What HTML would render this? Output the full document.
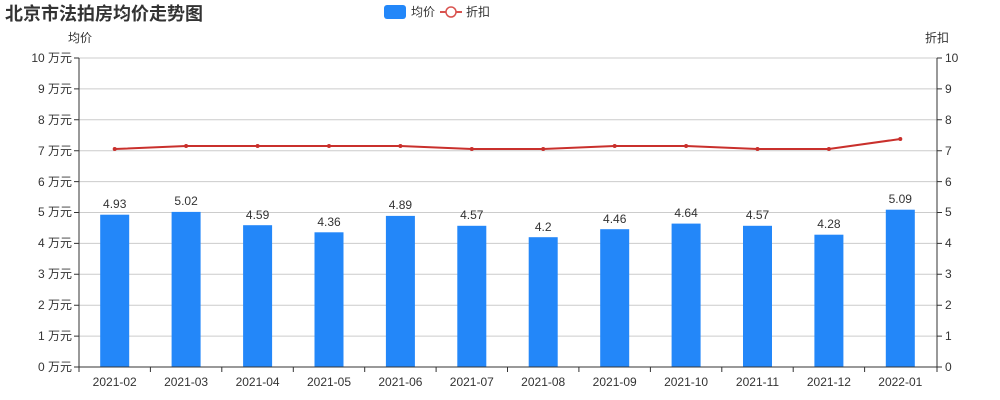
<!DOCTYPE html>
<html><head><meta charset="utf-8"><style>
html,body{margin:0;padding:0;background:#fff;}
svg{display:block;font-family:"Liberation Sans","Noto Sans CJK SC",sans-serif;}
</style></head><body>
<svg width="1000" height="400" viewBox="0 0 1000 400" xmlns="http://www.w3.org/2000/svg">
<text x="5" y="20" font-size="18" font-weight="bold" fill="#333">北京市法拍房均价走势图</text>
<rect x="384" y="5" width="22" height="14" rx="3" fill="#2387f9"/>
<text x="411" y="16" font-size="12" fill="#333">均价</text>
<line x1="440" y1="12" x2="462" y2="12" stroke="#d9534f" stroke-width="2"/>
<circle cx="451" cy="12" r="5" fill="#fff" stroke="#d9534f" stroke-width="1.5"/>
<text x="466" y="16" font-size="12" fill="#333">折扣</text>
<text x="80" y="42" font-size="12" fill="#333" text-anchor="middle">均价</text>
<text x="937" y="42" font-size="12" fill="#333" text-anchor="middle">折扣</text>
<g stroke="#ccc" stroke-width="1">
<line x1="79" y1="336.1" x2="937" y2="336.1"/><line x1="79" y1="305.2" x2="937" y2="305.2"/>
<line x1="79" y1="274.3" x2="937" y2="274.3"/><line x1="79" y1="243.4" x2="937" y2="243.4"/>
<line x1="79" y1="212.5" x2="937" y2="212.5"/><line x1="79" y1="181.6" x2="937" y2="181.6"/>
<line x1="79" y1="150.7" x2="937" y2="150.7"/><line x1="79" y1="119.8" x2="937" y2="119.8"/>
<line x1="79" y1="88.9" x2="937" y2="88.9"/><line x1="79" y1="58" x2="937" y2="58"/>
</g>
<g fill="#2387f9">
<rect x="100.2" y="214.7" width="29" height="152.3"/>
<rect x="171.6" y="211.9" width="29" height="155.1"/>
<rect x="243.1" y="225.2" width="29" height="141.8"/>
<rect x="314.5" y="232.3" width="29" height="134.7"/>
<rect x="385.9" y="215.9" width="29" height="151.1"/>
<rect x="457.3" y="225.8" width="29" height="141.2"/>
<rect x="528.7" y="237.2" width="29" height="129.8"/>
<rect x="600.2" y="229.2" width="29" height="137.8"/>
<rect x="671.6" y="223.6" width="29" height="143.4"/>
<rect x="743" y="225.8" width="29" height="141.2"/>
<rect x="814.4" y="234.7" width="29" height="132.3"/>
<rect x="885.8" y="209.7" width="29" height="157.3"/>
</g>
<g font-size="12" fill="#333" text-anchor="middle">
<text x="114.7" y="208">4.93</text><text x="186.1" y="205">5.02</text><text x="257.6" y="219">4.59</text>
<text x="329" y="226">4.36</text><text x="400.4" y="209">4.89</text><text x="471.8" y="219">4.57</text>
<text x="543.2" y="231">4.2</text><text x="614.7" y="223">4.46</text><text x="686.1" y="217">4.64</text>
<text x="757.5" y="219">4.57</text><text x="828.9" y="228">4.28</text><text x="900.3" y="203">5.09</text>
</g>
<polyline fill="none" stroke="#c9302c" stroke-width="2" points="114.7,149 186.1,146 257.6,146 329,146 400.4,146 471.8,149 543.2,149 614.7,146 686.1,146 757.5,149 828.9,149 900.3,139"/>
<g fill="#c9302c">
<circle cx="114.7" cy="149" r="2"/><circle cx="186.1" cy="146" r="2"/><circle cx="257.6" cy="146" r="2"/><circle cx="329" cy="146" r="2"/><circle cx="400.4" cy="146" r="2"/><circle cx="471.8" cy="149" r="2"/><circle cx="543.2" cy="149" r="2"/><circle cx="614.7" cy="146" r="2"/><circle cx="686.1" cy="146" r="2"/><circle cx="757.5" cy="149" r="2"/><circle cx="828.9" cy="149" r="2"/><circle cx="900.3" cy="139" r="2"/>
</g>
<g stroke="#333" stroke-width="1">
<line x1="79" y1="58" x2="79" y2="367"/><line x1="937" y1="58" x2="937" y2="367"/>
<line x1="79" y1="367" x2="937" y2="367"/>
</g>
<g stroke="#333" stroke-width="1">
<path d="M74 367H79M74 336.1H79M74 305.2H79M74 274.3H79M74 243.4H79M74 212.5H79M74 181.6H79M74 150.7H79M74 119.8H79M74 88.9H79M74 58H79"/>
<path d="M937 367H942M937 336.1H942M937 305.2H942M937 274.3H942M937 243.4H942M937 212.5H942M937 181.6H942M937 150.7H942M937 119.8H942M937 88.9H942M937 58H942"/>
<path d="M79 367V372M150.4 367V372M221.8 367V372M293.3 367V372M364.7 367V372M436.1 367V372M507.5 367V372M578.9 367V372M650.4 367V372M721.8 367V372M793.2 367V372M864.6 367V372M937 367V372"/>
</g>
<g font-size="12" fill="#333" text-anchor="end">
<text x="72" y="371">0 万元</text><text x="72" y="340">1 万元</text><text x="72" y="309">2 万元</text>
<text x="72" y="278">3 万元</text><text x="72" y="247">4 万元</text><text x="72" y="216">5 万元</text>
<text x="72" y="186">6 万元</text><text x="72" y="155">7 万元</text><text x="72" y="124">8 万元</text>
<text x="72" y="93">9 万元</text><text x="72" y="62">10 万元</text>
</g>
<g font-size="12" fill="#333">
<text x="945" y="371">0</text><text x="945" y="340">1</text><text x="945" y="309">2</text>
<text x="945" y="278">3</text><text x="945" y="247">4</text><text x="945" y="216">5</text>
<text x="945" y="186">6</text><text x="945" y="155">7</text><text x="945" y="124">8</text>
<text x="945" y="93">9</text><text x="945" y="62">10</text>
</g>
<g font-size="12" fill="#333" text-anchor="middle">
<text x="114.7" y="386">2021-02</text><text x="186.1" y="386">2021-03</text><text x="257.6" y="386">2021-04</text>
<text x="329" y="386">2021-05</text><text x="400.4" y="386">2021-06</text><text x="471.8" y="386">2021-07</text>
<text x="543.2" y="386">2021-08</text><text x="614.7" y="386">2021-09</text><text x="686.1" y="386">2021-10</text>
<text x="757.5" y="386">2021-11</text><text x="828.9" y="386">2021-12</text><text x="900.3" y="386">2022-01</text>
</g>
</svg>
</body></html>
